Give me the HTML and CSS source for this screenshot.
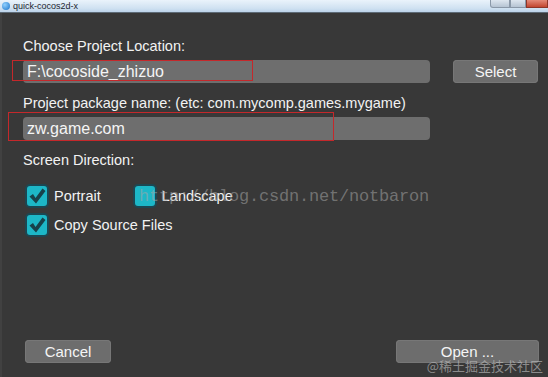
FILE: index.html
```html
<!DOCTYPE html>
<html lang="en">
<head>
    <meta charset="UTF-8">
    <title>quick-cocos2d-x</title>
    <link rel="stylesheet" href="styles.css">
</head>
<body>
    <div class="window">
        <div class="titlebar">
            <span class="app-icon"></span>
            <span class="title">quick-cocos2d-x</span>
            <div class="win-buttons">
                <span class="wb min"></span>
                <span class="wb max"></span>
                <span class="wb close"></span>
            </div>
        </div>

        <div class="dialog">
            <div class="label first">Choose Project Location:</div>
            <div class="row">
                <div class="field">
                    <div class="input">F:\cocoside_zhizuo</div>
                    <div class="mark mark-location"></div>
                </div>
                <div class="btn btn-select">Select</div>
            </div>

            <div class="label">Project package name: (etc: com.mycomp.games.mygame)</div>
            <div class="row">
                <div class="field">
                    <div class="input">zw.game.com</div>
                    <div class="mark mark-package"></div>
                </div>
            </div>

            <div class="label">Screen Direction:</div>

            <div class="checks">
                <div class="check-row">
                    <label class="check">
                        <span class="box">
                            <svg viewBox="0 0 24 24" width="24" height="24"><path d="M4.5 12.5 L8 10 L10.5 14 L17.5 4.5 L20.5 7 L11 19.5 Z" fill="#17424b"/></svg>
                        </span>
                        Portrait
                    </label>
                    <label class="check landscape">
                        <span class="box"></span>
                        Landscape
                    </label>
                </div>
                <label class="check">
                    <span class="box">
                        <svg viewBox="0 0 24 24" width="24" height="24"><path d="M4.5 12.5 L8 10 L10.5 14 L17.5 4.5 L20.5 7 L11 19.5 Z" fill="#17424b"/></svg>
                    </span>
                    Copy Source Files
                </label>
                <div class="watermark">http://blog.csdn.net/notbaron</div>
            </div>

            <div class="footer">
                <div class="btn btn-cancel">Cancel</div>
                <div class="btn btn-open">Open ...</div>
            </div>
        </div>

        <div class="credit">@稀土掘金技术社区</div>
    </div>
</body>
</html>
```

FILE: styles.css
```css
html, body {
    margin: 0;
    padding: 0;
}
body {
    width: 548px;
    height: 377px;
    overflow: hidden;
    background: #383838;
    font-family: 'Liberation Sans', Arial, sans-serif;
    color: #f2f2f2;
}
.window {
    position: relative;
    height: 377px;
    display: flex;
    flex-direction: column;
    border-left: 2px solid #414141;
    box-sizing: border-box;
}
.titlebar {
    height: 12px;
    flex-shrink: 0;
    display: flex;
    align-items: center;
    background: linear-gradient(#eaf3fb, #cfe1f1 70%, #bcd3ea);
    border-bottom: 1px solid #5d6a76;
    margin-left: -2px;
}
.app-icon {
    width: 8px;
    height: 8px;
    margin-left: 2px;
    border-radius: 50%;
    background: radial-gradient(circle at 35% 35%, #8fd0ff, #1a73c9);
}
.title {
    margin-left: 3px;
    font-size: 9px;
    color: #1d2630;
}
.win-buttons {
    margin-left: auto;
    align-self: flex-start;
    display: flex;
    height: 8px;
}
.wb {
    display: block;
    height: 8px;
    border: 1px solid #8a98a8;
    border-top: none;
    box-sizing: border-box;
}
.wb.min {
    width: 20px;
    background: linear-gradient(#dde6ef, #b6c4d3);
    border-radius: 0 0 0 3px;
}
.wb.max {
    width: 16px;
    background: linear-gradient(#dde6ef, #b6c4d3);
}
.wb.close {
    width: 22px;
    background: linear-gradient(#e48a78, #c24630);
    border-color: #8e3628;
}
.dialog {
    flex: 1;
    display: flex;
    flex-direction: column;
    padding: 0 10px 14px 21px;
}
.label {
    font-size: 14.5px;
    line-height: 18px;
    margin-top: 11px;
}
.label.first {
    margin-top: 24px;
}
.row {
    display: flex;
    align-items: center;
    margin-top: 5px;
}
.field {
    position: relative;
}
.input {
    width: 403px;
    height: 23px;
    line-height: 23px;
    padding-left: 4px;
    background: #6e6e6e;
    border-radius: 4px;
    font-size: 16px;
    color: #f5f5f5;
}
.mark {
    position: absolute;
    border: 1px solid #c4282b;
    box-sizing: border-box;
}
.mark-location {
    left: -11px;
    top: 0;
    width: 241px;
    height: 21px;
}
.mark-package {
    left: -15px;
    top: -5px;
    width: 326px;
    height: 29px;
}
.btn {
    height: 23px;
    line-height: 23px;
    background: #6d6d6d;
    border-radius: 4px;
    text-align: center;
    font-size: 15px;
    color: #f5f5f5;
    box-shadow: inset 0 0 0 1px #777;
}
.btn-select {
    width: 85px;
    margin-left: auto;
}
.checks {
    position: relative;
    margin-top: 15px;
    display: flex;
    flex-direction: column;
    gap: 5px;
}
.check-row {
    display: flex;
}
.check {
    display: flex;
    align-items: center;
    gap: 5px;
    font-size: 14.5px;
    margin-left: 2px;
}
.check.landscape {
    margin-left: 32px;
}
.box {
    width: 24px;
    height: 24px;
    box-sizing: border-box;
    border: 2px solid #1c4752;
    border-radius: 5px;
    background: #1db7c7;
    display: flex;
    align-items: center;
    justify-content: center;
    overflow: hidden;
}
.box svg {
    flex-shrink: 0;
}
.watermark {
    position: absolute;
    left: 116px;
    top: 3px;
    font-family: 'Liberation Mono', 'DejaVu Sans Mono', monospace;
    font-size: 17px;
    letter-spacing: -0.2px;
    color: rgba(165, 165, 165, 0.55);
    white-space: nowrap;
}
.footer {
    margin-top: auto;
    display: flex;
    justify-content: space-between;
    align-items: center;
}
.btn-cancel {
    width: 86px;
    margin-left: 2px;
}
.btn-open {
    width: 143px;
    margin-right: -1px;
}
.credit {
    position: absolute;
    right: 5px;
    bottom: 4px;
    font-family: 'Noto Sans CJK SC', sans-serif;
    font-size: 13px;
    line-height: 14px;
    color: rgba(190, 190, 190, 0.65);
}
```
